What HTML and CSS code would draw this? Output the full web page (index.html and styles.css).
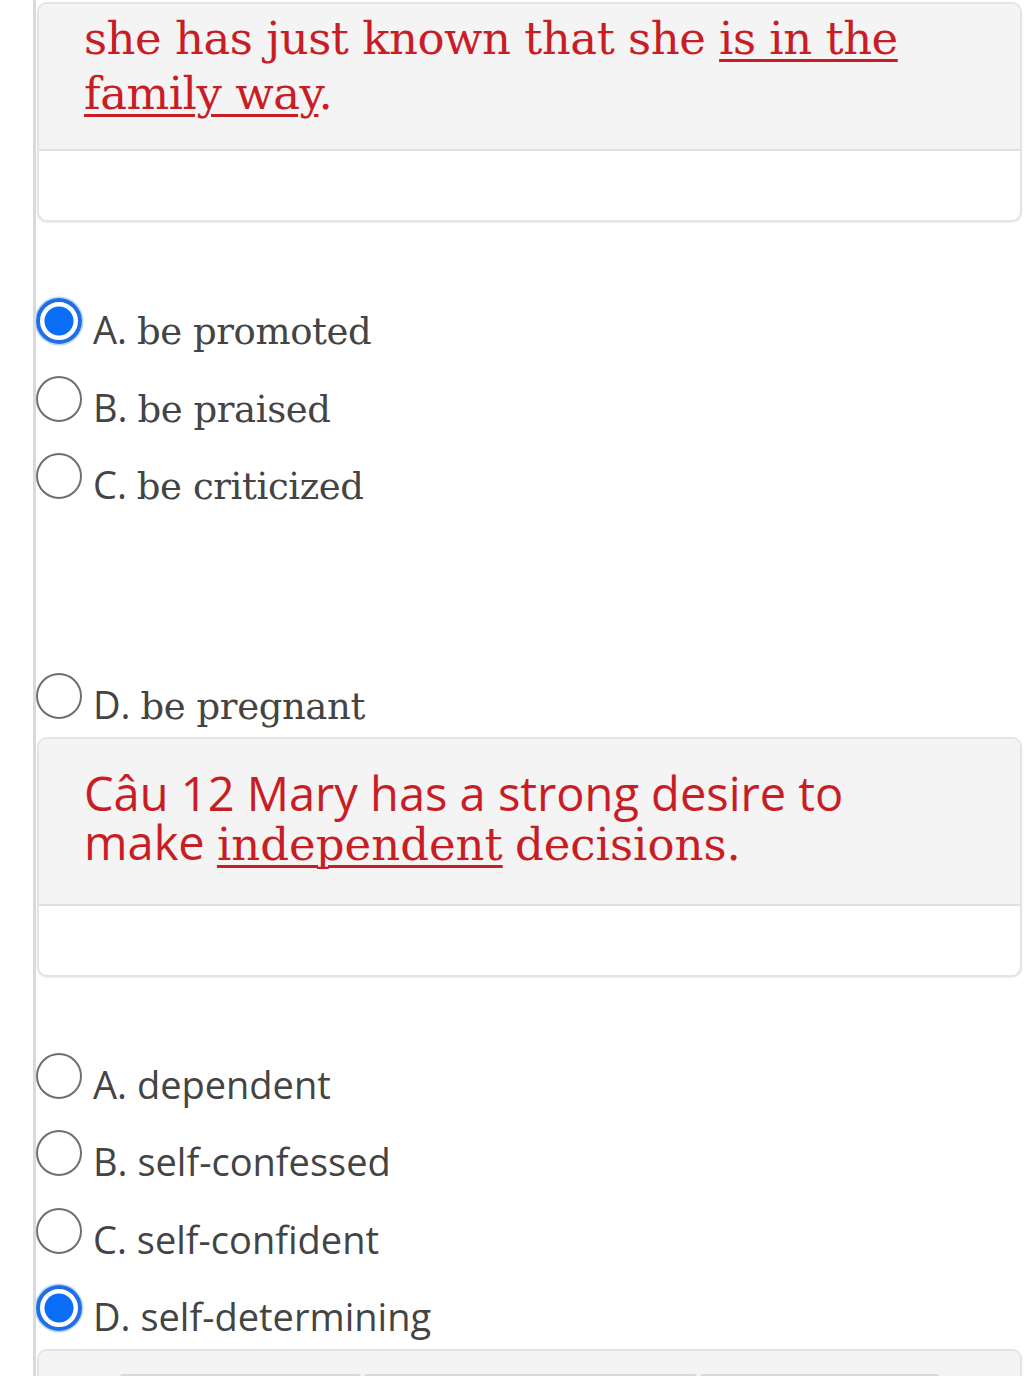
FILE: index.html
```html
<!DOCTYPE html>
<html lang="vi">
<head>
<meta charset="utf-8">
<title>Quiz</title>
<link rel="stylesheet" href="styles.css">
</head>
<body>
<div class="page">
  <section class="question">
    <div class="q-card q-card--first">
      <div class="q-head q-head--serif">she has just known that she <span class="key">is in the family way</span>.</div>
      <div class="q-body"></div>
    </div>
    <ul class="answers">
      <li class="answer"><span class="radio radio--checked"></span><span class="label"><span class="letter">A.</span> <span class="opt-serif">be promoted</span></span></li>
      <li class="answer"><span class="radio"></span><span class="label"><span class="letter">B.</span> <span class="opt-serif">be praised</span></span></li>
      <li class="answer"><span class="radio"></span><span class="label"><span class="letter">C.</span> <span class="opt-serif">be criticized</span></span></li>
      <li class="answer-space" aria-hidden="true"></li>
      <li class="answer"><span class="radio"></span><span class="label"><span class="letter">D.</span> <span class="opt-serif">be pregnant</span></span></li>
    </ul>
  </section>

  <section class="question">
    <div class="q-card">
      <div class="q-head">Câu 12 Mary has a strong desire to make <span class="serif key">independent</span> <span class="serif">decisions.</span></div>
      <div class="q-body"></div>
    </div>
    <ul class="answers">
      <li class="answer"><span class="radio"></span><span class="label">A. dependent</span></li>
      <li class="answer"><span class="radio"></span><span class="label">B. self-confessed</span></li>
      <li class="answer"><span class="radio"></span><span class="label">C. self-confident</span></li>
      <li class="answer"><span class="radio radio--checked"></span><span class="label">D. self-determining</span></li>
    </ul>
  </section>

  <section class="question">
    <div class="q-card q-card--cut">
      <div class="q-head q-head--tabs">
        <div class="tabs">
          <span class="tab tab--a"></span>
          <span class="tab tab--b"></span>
          <span class="tab tab--c"></span>
        </div>
      </div>
    </div>
  </section>
</div>
</body>
</html>
```

FILE: styles.css
```css
html, body {
  margin: 0;
  background: #ffffff;
}

.page {
  margin-left: 33px;
  border-left: 3px solid #dadada;
  min-height: 1376px;
  overflow: hidden;
}

.q-card {
  margin: 0 2px 0 1px;
  border: 2px solid #e4e4e4;
  border-radius: 10px;
  background: #ffffff;
  overflow: hidden;
  box-shadow: 0 1px 2px rgba(0, 0, 0, 0.08);
}

.q-card--first {
  margin-top: 2px;
}

.q-head {
  background: #f4f4f4;
  border-bottom: 2px solid #e0e0e0;
  padding: 30px 90px 37px 45px;
  color: #c91d25;
  font-family: "Open Sans", "Noto Sans", sans-serif;
  font-size: 47px;
  line-height: 49px;
}

.q-head--serif {
  font-family: "DejaVu Serif", serif;
  font-size: 45px;
  line-height: 55px;
  letter-spacing: -0.5px;
  padding-top: 7px;
  padding-bottom: 28px;
}

.q-body {
  height: 69px;
}

.key {
  text-decoration: underline;
  text-decoration-thickness: 3px;
  text-underline-offset: 5px;
}

.serif {
  font-family: "DejaVu Serif", serif;
  font-size: 45px;
  letter-spacing: 0;
  line-height: 1;
}

.answers {
  list-style: none;
  margin: 0;
  padding: 76px 0 10px;
  display: flex;
  flex-direction: column;
  gap: 23.5px;
}

.answer {
  display: flex;
  align-items: flex-start;
  color: #444444;
  font-family: "Open Sans", "Noto Sans", sans-serif;
  font-size: 38px;
  line-height: 46px;
}

.answer-space {
  height: 118.5px;
}

.radio {
  flex: none;
  width: 46px;
  height: 46px;
  box-sizing: border-box;
  border-radius: 50%;
  border: 2.5px solid #6f6f6f;
  background: #ffffff;
}

.radio--checked {
  border: 4px solid #1d6fe3;
  box-shadow: 0 0 0 1.5px rgba(29, 111, 227, 0.3);
  background: radial-gradient(circle, #0b6ef6 0 14px, #ffffff 15px);
}

.label {
  margin: 8px 0 0 11px;
  white-space: nowrap;
}

.opt-serif {
  font-family: "DejaVu Serif", serif;
  font-size: 37px;
  letter-spacing: -0.4px;
  line-height: 1;
}

.q-card--cut {
  border-bottom: none;
  border-radius: 10px 10px 0 0;
}

.q-head--tabs {
  border-bottom: none;
  padding: 23px 0 0 81px;
  height: 40px;
}

.tabs {
  display: flex;
  gap: 3px;
}

.tab {
  height: 12px;
  background: #d9d9d9;
  border-radius: 3px 3px 0 0;
}

.tab--a { width: 241px; }
.tab--b { width: 333px; }
.tab--c { width: 239px; }
```
